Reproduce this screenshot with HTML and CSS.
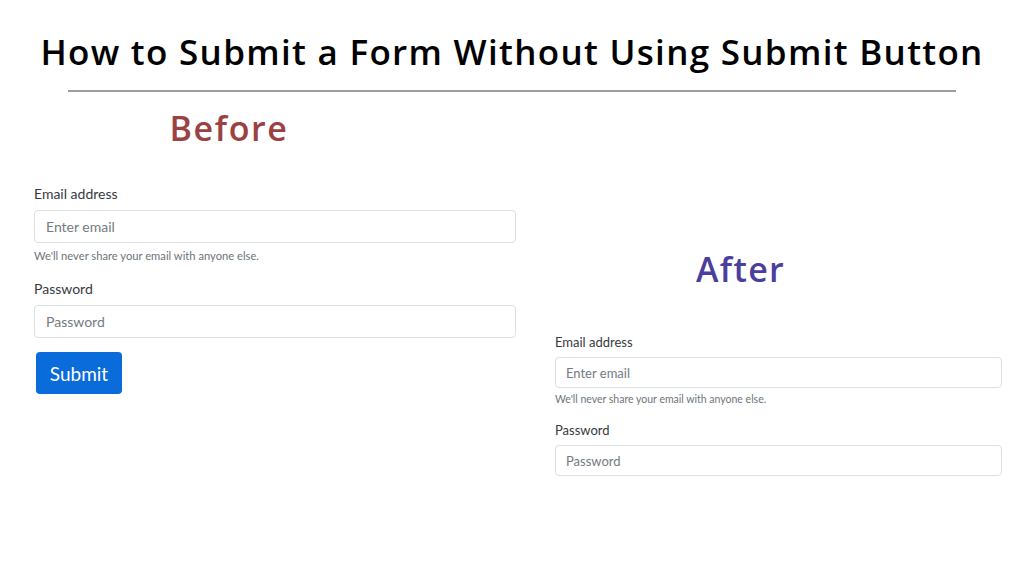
FILE: index.html
```html
<!DOCTYPE html>
<html lang="en">
<head>
<meta charset="utf-8">
<title>How to Submit a Form Without Using Submit Button</title>
<link rel="stylesheet" href="styles.css">
</head>
<body>
<header class="header">
  <h1 class="title">How to Submit a Form Without Using Submit Button</h1>
  <hr class="rule">
</header>
<main class="demo">
  <section class="panel panel-before">
    <h2 class="caption caption-before">Before</h2>
    <form class="form form-lg">
      <div class="group">
        <label class="label">Email address</label>
        <input class="field" type="email" placeholder="Enter email">
        <small class="help">We'll never share your email with anyone else.</small>
      </div>
      <div class="group">
        <label class="label">Password</label>
        <input class="field" type="password" placeholder="Password">
      </div>
      <button class="btn" type="button">Submit</button>
    </form>
  </section>
  <section class="panel panel-after">
    <h2 class="caption caption-after">After</h2>
    <form class="form form-sm">
      <div class="group">
        <label class="label">Email address</label>
        <input class="field" type="email" placeholder="Enter email">
        <small class="help">We'll never share your email with anyone else.</small>
      </div>
      <div class="group">
        <label class="label">Password</label>
        <input class="field" type="password" placeholder="Password">
      </div>
    </form>
  </section>
</main>
</body>
</html>
```
FILE: styles.css
```css
html, body {
  margin: 0;
  padding: 0;
  background: #ffffff;
}
body {
  width: 1024px;
  height: 576px;
  overflow: hidden;
  font-family: Lato, "Noto Sans", sans-serif;
  color: #212529;
}
.header {
  padding-top: 30px;
}
.title {
  margin: 0;
  text-align: center;
  font-family: "Open Sans", sans-serif;
  font-weight: 600;
  font-size: 35px;
  line-height: 44px;
  color: #000;
  letter-spacing: 1.3px;
}
.rule {
  margin: 16px 68px 0;
  border: 0;
  border-top: 2px solid #9e9e9e;
  height: 0;
}
.demo {
  display: grid;
  grid-template-columns: 482px 447px;
  column-gap: 39px;
  padding-left: 34px;
  align-items: start;
}
.caption {
  margin: 0;
  font-family: "Open Sans", sans-serif;
  font-weight: 600;
  font-size: 34px;
  line-height: 40px;
  text-align: center;
}
.caption-before {
  color: #9b4143;
  letter-spacing: 1.6px;
  padding-right: 92px;
  margin-top: 16px;
  margin-bottom: 36px;
}
.caption-after {
  color: #4b3f9c;
  letter-spacing: 1.3px;
  padding-right: 76px;
  margin-top: 157px;
  margin-bottom: 44px;
}
.form {
  display: flex;
  flex-direction: column;
}
.group {
  display: flex;
  flex-direction: column;
}
.label {
  color: #363a3e;
}
.field {
  box-sizing: border-box;
  width: 100%;
  border: 1px solid #dcdfe3;
  border-radius: 4px;
  background: #fff;
  font-family: inherit;
  color: #495057;
  outline: none;
}
.field::placeholder {
  color: #737b83;
}
.help {
  color: #6c757d;
}
.form-lg .label {
  font-size: 14px;
  line-height: 20px;
  margin-bottom: 6px;
}
.form-lg .field {
  height: 33px;
  padding: 0 11px;
  font-size: 14px;
}
.form-lg .help {
  font-size: 11.2px;
  line-height: 14px;
  margin-top: 6px;
}
.form-lg .group + .group {
  margin-top: 16px;
}
.form-sm .label {
  font-size: 13px;
  line-height: 18px;
  margin-bottom: 6px;
}
.form-sm .field {
  height: 31px;
  padding: 0 10px;
  font-size: 13px;
}
.form-sm .help {
  font-size: 10.5px;
  line-height: 13px;
  margin-top: 5px;
}
.form-sm .group + .group {
  margin-top: 15px;
}
.btn {
  align-self: flex-start;
  margin-top: 14px;
  margin-left: 2px;
  width: 86px;
  height: 42px;
  border: 0;
  border-radius: 4px;
  background: #0a6bdb;
  color: #fff;
  font-family: Lato, "Noto Sans", sans-serif;
  font-size: 19px;
}
```
